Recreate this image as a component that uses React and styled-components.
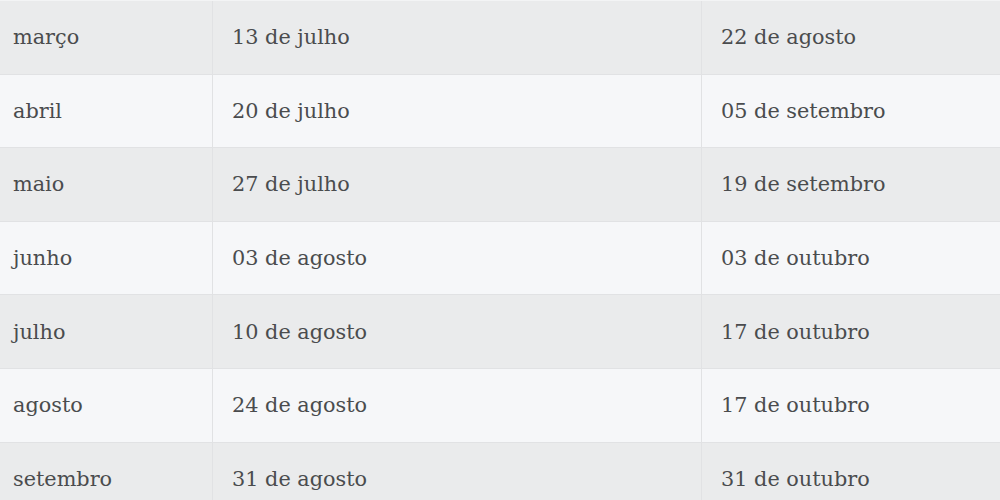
import React from 'react'
import styled, { createGlobalStyle } from 'styled-components'

const GlobalStyle = createGlobalStyle`
  html, body {
    margin: 0;
    padding: 0;
    background: #f3f4f5;
    overflow: hidden;
  }
`

const rows = [
  ['março', '13 de julho', '22 de agosto'],
  ['abril', '20 de julho', '05 de setembro'],
  ['maio', '27 de julho', '19 de setembro'],
  ['junho', '03 de agosto', '03 de outubro'],
  ['julho', '10 de agosto', '17 de outubro'],
  ['agosto', '24 de agosto', '17 de outubro'],
  ['setembro', '31 de agosto', '31 de outubro'],
]

function App() {
  return (
    <>
      <GlobalStyle />
      <Table>
        {rows.map((row, i) => (
          <Row key={i} $odd={i % 2 === 0}>
            {row.map((cell, j) => (
              <Cell key={j} $first={j === 0}>{cell}</Cell>
            ))}
          </Row>
        ))}
      </Table>
    </>
  )
}

const Table = styled.div`
  width: 1000px;
  margin-top: 1px;
  font-family: "DejaVu Serif", "Liberation Serif", serif;
  font-size: 20.8px;
  color: #4a4c4e;
`

const Row = styled.div`
  display: grid;
  grid-template-columns: 212px 489px 1fr;
  height: 73.6px;
  box-sizing: border-box;
  border-bottom: 1px solid #e1e2e4;
  background: ${p => (p.$odd ? '#eaebec' : '#f6f7f9')};
`

const Cell = styled.div`
  display: flex;
  align-items: center;
  padding-left: ${p => (p.$first ? '13px' : '19px')};
  border-left: ${p => (p.$first ? 'none' : '1px solid #e1e2e4')};
  white-space: nowrap;
`

export default App
